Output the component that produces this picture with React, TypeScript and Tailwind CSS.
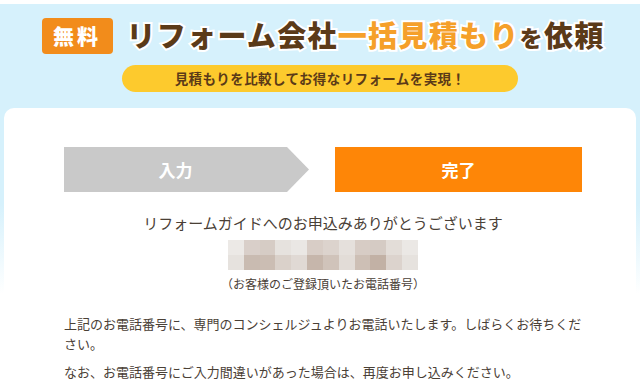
import React from 'react';

const MOSAIC_TOP = ['#ece9e6', '#d9cfc9', '#d6ccc5', '#e6e2de', '#eae7e4', '#d8cdc6', '#dcd3cd', '#e5e0dc', '#d7ccc5', '#d5cbc4', '#e3ddd8', '#ebe8e5'];
const MOSAIC_BOTTOM = ['#e6e2de', '#c9bbb1', '#cbbdb3', '#dad1ca', '#e0d9d4', '#c6b6ab', '#d0c3ba', '#e2dcd7', '#cdbfb5', '#c2b1a5', '#dcd3cd', '#e6e2de'];

const outline = '[-webkit-text-stroke:4px_#fff] [paint-order:stroke_fill]';

const App: React.FC = () => {
  return (
    <div
      className="w-[640px] h-[387px] overflow-hidden pt-[4px] bg-white"
      style={{ fontFamily: '"Noto Sans CJK JP", "Noto Sans", sans-serif' }}
    >
      <div className="h-full bg-[linear-gradient(180deg,#d6f1fc_0px,#d6f1fc_200px,#ffffff_290px)]">
        {/* header */}
        <div className="flex items-center justify-center gap-[14px] pt-[10px] pl-[6px]">
          <div className="w-[71px] h-[36px] rounded-[4px] bg-[#f28c1b] flex items-center justify-center text-white text-[21px] font-black tracking-[3px] leading-none">
            無料
          </div>
          <h1 className="text-[29px] font-black leading-[40px] tracking-[1.3px] text-[#5b3a18] whitespace-nowrap">
            <span className={outline}>リフォーム会社</span>
            <span className={`${outline} text-[#f5a02a]`}>一括見積もり</span>
            <span className={`${outline} text-[23px]`}>を</span>
            <span className={outline}>依頼</span>
          </h1>
        </div>
        <div className="mx-auto mt-[8px] w-[396px] h-[27px] rounded-full bg-[#fdca2d] flex items-center justify-center text-[13.5px] font-bold tracking-[0.4px] text-[#5b3a18]">
          見積もりを比較してお得なリフォームを実現！
        </div>

        {/* card */}
        <div className="mx-[4px] mt-[16px] h-[300px] rounded-t-[10px] bg-white pt-[39px] pl-[60px] pr-[54px]">
          <div className="flex gap-[26px] h-[45px]">
            <div className="w-[245px] shrink-0 bg-[#c9c9c9] pr-[22px] flex items-center justify-center text-white text-[17px] font-bold [clip-path:polygon(0_0,calc(100%-22px)_0,100%_50%,calc(100%-22px)_100%,0_100%)]">
              入力
            </div>
            <div className="w-[247px] shrink-0 bg-[#fe8607] flex items-center justify-center text-white text-[17px] font-bold">
              完了
            </div>
          </div>

          <p className="mt-[20px] text-center text-[15px] leading-[22px] text-[#4a4036]">
            リフォームガイドへのお申込みありがとうございます
          </p>
          <div className="mx-auto mt-[6px] w-[190px] flex flex-col">
            {[MOSAIC_TOP, MOSAIC_BOTTOM].map((row, i) => (
              <div key={i} className="flex h-[15px]">
                {row.map((c, j) => (
                  <div key={j} className="flex-1" style={{ backgroundColor: c }} />
                ))}
              </div>
            ))}
          </div>
          <p className="mt-[5px] text-center text-[12px] leading-[18px] text-[#4a4036]">
            （お客様のご登録頂いたお電話番号）
          </p>

          <p className="mt-[21px] text-[13px] leading-[20px] text-[#4a4036]">
            上記のお電話番号に、専門のコンシェルジュよりお電話いたします。しばらくお待ちください。
          </p>
          <p className="mt-[8px] text-[13px] leading-[20px] text-[#4a4036]">
            なお、お電話番号にご入力間違いがあった場合は、再度お申し込みください。
          </p>
        </div>
      </div>
    </div>
  );
};

export default App;
